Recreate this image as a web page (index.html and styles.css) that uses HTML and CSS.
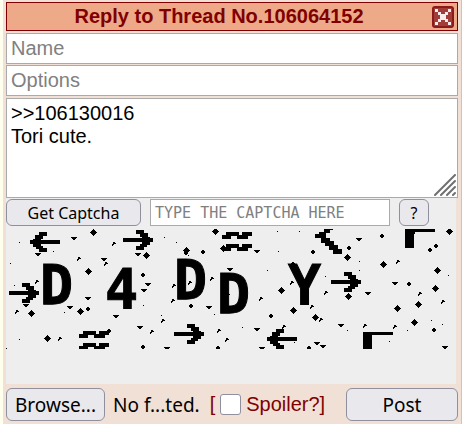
FILE: index.html
```
<!DOCTYPE html>
<html lang="en">
<head>
    <meta charset="UTF-8">
    <meta name="viewport" content="width=device-width, initial-scale=1.0">
    <title>Reply to Thread No.106064152</title>
    <link rel="stylesheet" href="styles.css">
</head>
<body>
    <form class="quick-reply">
        <div class="qr-header">
            <span class="qr-title">Reply to Thread No.106064152</span>
            <button type="button" class="qr-close" aria-label="Close">
                <svg width="22" height="22" viewBox="0 0 22 22">
                    <rect width="22" height="22" rx="3" fill="#8b1a1a"/>
                    <rect x="2" y="2" width="18" height="18" fill="#a23c38"/>
                    <path fill="#fff" d="M3 3h3v3h-3zM6 6h3v3h-3zM8 8h3v3h-3zM11 11h3v3h-3zM13 13h3v3h-3zM16 16h3v3h-3zM16 3h3v3h-3zM13 6h3v3h-3zM11 8h3v3h-3zM8 11h3v3h-3zM6 13h3v3h-3zM3 16h3v3h-3z" opacity=".9"/>
                </svg>
            </button>
        </div>

        <input type="text" class="qr-field" placeholder="Name" aria-label="Name">
        <input type="text" class="qr-field" placeholder="Options" aria-label="Options">
        <div class="comment-wrap">
            <textarea class="qr-comment" aria-label="Comment">&gt;&gt;106130016
Tori cute.</textarea>
            <svg class="grip" width="22" height="22" viewBox="0 0 22 22" stroke="#707070" stroke-width="2" stroke-linecap="round">
                <path d="M1 21L21 1M7 21L21 7M13 21L21 13M19 21L21 19"/>
            </svg>
        </div>

        <div class="captcha">
            <div class="captcha-bar">
                <button type="button" class="btn captcha-get">Get Captcha</button>
                <input type="text" class="captcha-input" placeholder="TYPE THE CAPTCHA HERE" aria-label="Captcha">
                <button type="button" class="btn captcha-help">?</button>
            </div>
            <svg class="captcha-image" viewBox="0 0 450 120" shape-rendering="crispEdges">
                <defs>
                    <path id="arrow" d="M0 8h19v-1h-2v-3h-4v-4h8v3h4v4h2v1h3v4h-3v3h-3v2h-3v3h-8v-4h4v-2h2v-2h-19z"/>
                    <path id="waves" d="M0 7v-4h4v-3h13v3h3v-3h10v4h-4v3h-11v-3h-6v3zM0 19v-4h4v-3h13v3h3v-3h10v4h-4v3h-11v-3h-6v3z"/>
                    <marker id="big" markerUnits="userSpaceOnUse" markerWidth="7" markerHeight="7" refX="3" refY="3">
                        <path d="M3 0h1v1h1v1h1v1h1v1h-1v1h-1v1h-1v1h-1v-1h-1v-1h-1v-1h-1v-1h1v-1h1v-1h1z"/>
                    </marker>
                    <marker id="mid" markerUnits="userSpaceOnUse" markerWidth="4" markerHeight="4" refX="2" refY="2">
                        <path d="M1 0h2v1h1v2h-1v1h-2v-1h-1v-2h1z"/>
                    </marker>
                    <marker id="tri" markerUnits="userSpaceOnUse" markerWidth="6" markerHeight="4" refX="3" refY="1">
                        <path d="M0 0h6v1h-1v1h-1v1h-2v-1h-1v-1h-1z"/>
                    </marker>
                    <marker id="bit" markerUnits="userSpaceOnUse" markerWidth="4" markerHeight="4" refX="2" refY="2">
                        <path d="M1 0h2v1h1v1h-2v1h-1v1h-1v-2h1z"/>
                    </marker>
                    <marker id="dot" markerUnits="userSpaceOnUse" markerWidth="1" markerHeight="1">
                        <path d="M0 0h1v1h-1z"/>
                    </marker>
                </defs>

                <text class="captcha-text"><tspan x="34" y="75">D</tspan><tspan x="99" y="79">4</tspan><tspan x="168" y="70">D</tspan><tspan x="211" y="84">D</tspan><tspan x="282" y="75">Y</tspan></text>

                <!-- arrows -->
                <use href="#arrow" transform="translate(54 3) scale(-1 1)"/>
                <use href="#arrow" x="117" y="1"/>
                <use href="#arrow" x="3" y="54"/>
                <use href="#arrow" x="168" y="95"/>
                <use href="#arrow" transform="translate(291 100) scale(-1 1)"/>
                <use href="#arrow" x="325" y="43"/>

                <use href="#waves" x="216" y="3"/>
                <use href="#waves" x="73" y="102"/>
                <path d="M318 0h9v1h-3v3h-4v5h4v3h4v4h4v4h4v5h-9v-4h-4v-4h-4v-3h-4v-5h-6v-4h4v-2h5z"/>
                <path d="M399 0h30v3h-20v2h-1v14h-9z"/>
                <path d="M357 103h30v3h-21v14h-9z"/>

                <!-- noise -->
                <path class="big" d="M87 3L82 42 74 82 41 109 140 26 25 84 209 2 180 21 217 19 275 61 287 81 443 2 341 28 377 35 431 41 429 59 412 75 342 67 391 79 408 93 309 88"/>
                <path class="mid" d="M82 80L137 46 137 118 197 23 185 77 265 87 287 35 376 7 343 19 307 23 430 17 424 21 403 55 428 101 103 102 180 24 303 119 212 119"/>
                <path class="tri" d="M68 9L98 30 32 25 132 25 82 69 110 87 134 98 64 78 138 61 142 55 20 76 251 22 224 40 203 78 251 100 161 119 256 119 353 10 389 54 362 64 335 96 311 114 317 117 439 118"/>
                <path class="bit" d="M108 15L73 30 11 83 31 53 54 110 100 35 146 103 206 50 184 54 168 57 167 72 157 92 213 102 221 111 255 70 278 98 286 54 222 66 392 33 320 64 414 65 437 73 306 78 315 91 359 97 389 98"/>
                <path class="dot" d="M13 13L47 22 4 34 8 56 58 83 13 110 137 76 0 119 158 8 170 13 182 26 271 2 293 2 272 22 261 41 208 85 155 86 236 98 288 113 353 32 314 35 353 41 319 47 442 46 425 91 436 95 401 101 341 101 383 112"/>
            </svg>
        </div>

        <div class="qr-footer">
            <button type="button" class="btn btn-large browse" id="browse">Browse...</button>
            <input type="file" id="file" aria-label="File" hidden>
            <span class="file-name">No f...ted.</span>
            <label class="spoiler">[<input type="checkbox" class="spoiler-box">Spoiler?]</label>
            <button type="submit" class="btn btn-large post">Post</button>
        </div>
    </form>

    <script>
        document.getElementById('browse').addEventListener('click', () => {
            document.getElementById('file').click();
        });
    </script>
</body>
</html>
```
FILE: styles.css
```
* {
    box-sizing: border-box;
}
body {
    margin: 0;
    padding-left: 3px;
    background-color: #ffffee;
    font-family: "Liberation Sans", Arial, sans-serif;
    font-size: 20px;
}
.quick-reply {
    display: flex;
    flex-direction: column;
    padding: 2px 3px 3px;
    background-color: #f0e0d6;
    border-right: 1px solid #d9bfb7;
}
.qr-header {
    display: flex;
    align-items: center;
    height: 29px;
    margin-bottom: 2px;
    padding: 0 3px;
    background-color: #eeaa88;
    border: 1px solid #800000;
    color: #800000;
    font-weight: bold;
}
.qr-title {
    flex: 1;
    padding-right: 4px;
    text-align: center;
}
.qr-close {
    display: flex;
    padding: 0;
    border: none;
    background: none;
    cursor: pointer;
}
.qr-field,
.qr-comment,
.captcha-input {
    margin: 0;
    padding: 0 4px;
    border: 1px solid #aaa;
    background-color: #fff;
    color: #000;
    font-family: inherit;
    font-size: 20px;
    outline: none;
}
.qr-field {
    width: 100%;
    height: 31px;
    margin-bottom: 1px;
}
::placeholder {
    color: #808080;
}
.comment-wrap {
    display: flex;
    position: relative;
    margin-top: 1px;
}
.qr-comment {
    width: 100%;
    height: 100px;
    padding-top: 3px;
    line-height: 23px;
    resize: none;
}
.grip {
    position: absolute;
    right: 2px;
    bottom: 2px;
}
.btn {
    padding: 0;
    border: 1px solid #8f8f9d;
    border-radius: 6px;
    background-color: #e9e9ed;
    color: #000;
    font-family: "Noto Sans", sans-serif;
    font-size: 16px;
    cursor: pointer;
}
.captcha {
    margin-right: 2px;
    padding: 1px 0 35px;
    background-color: #eee;
}
.captcha-bar {
    display: flex;
    gap: 9px;
    height: 27px;
    margin-bottom: 3px;
}
.captcha-get {
    width: 135px;
}
.captcha-input {
    width: 240px;
    font-family: "DejaVu Sans Mono", monospace;
    font-size: 15px;
}
.captcha-help {
    width: 30px;
}
.captcha-image {
    display: block;
    width: 100%;
}
.captcha-text {
    font-family: "DejaVu Sans Mono", monospace;
    font-size: 55px;
    font-weight: bold;
    stroke: #000;
    stroke-width: 1px;
}
.big,
.mid,
.tri,
.bit,
.dot {
    fill: none;
}
.big {
    marker: url(#big);
}
.mid {
    marker: url(#mid);
}
.tri {
    marker: url(#tri);
}
.bit {
    marker: url(#bit);
}
.dot {
    marker: url(#dot);
}
.qr-footer {
    display: flex;
    align-items: center;
    margin-top: 4px;
}
.btn-large {
    height: 33px;
    font-size: 19px;
}
.browse {
    width: 99px;
}
.file-name {
    margin: 0 10px 0 8px;
    font-family: "Noto Sans", sans-serif;
    font-size: 19px;
    line-height: 24px;
    white-space: nowrap;
}
.spoiler {
    display: flex;
    align-items: center;
    color: #800000;
}
.spoiler-box {
    appearance: none;
    width: 21px;
    height: 21px;
    margin: 0 5px;
    border: 1px solid #8f8f9d;
    border-radius: 3px;
    background-color: #fff;
}
.spoiler-box:checked {
    background-color: #0060df;
}
.post {
    width: 112px;
    margin-left: auto;
}
```
